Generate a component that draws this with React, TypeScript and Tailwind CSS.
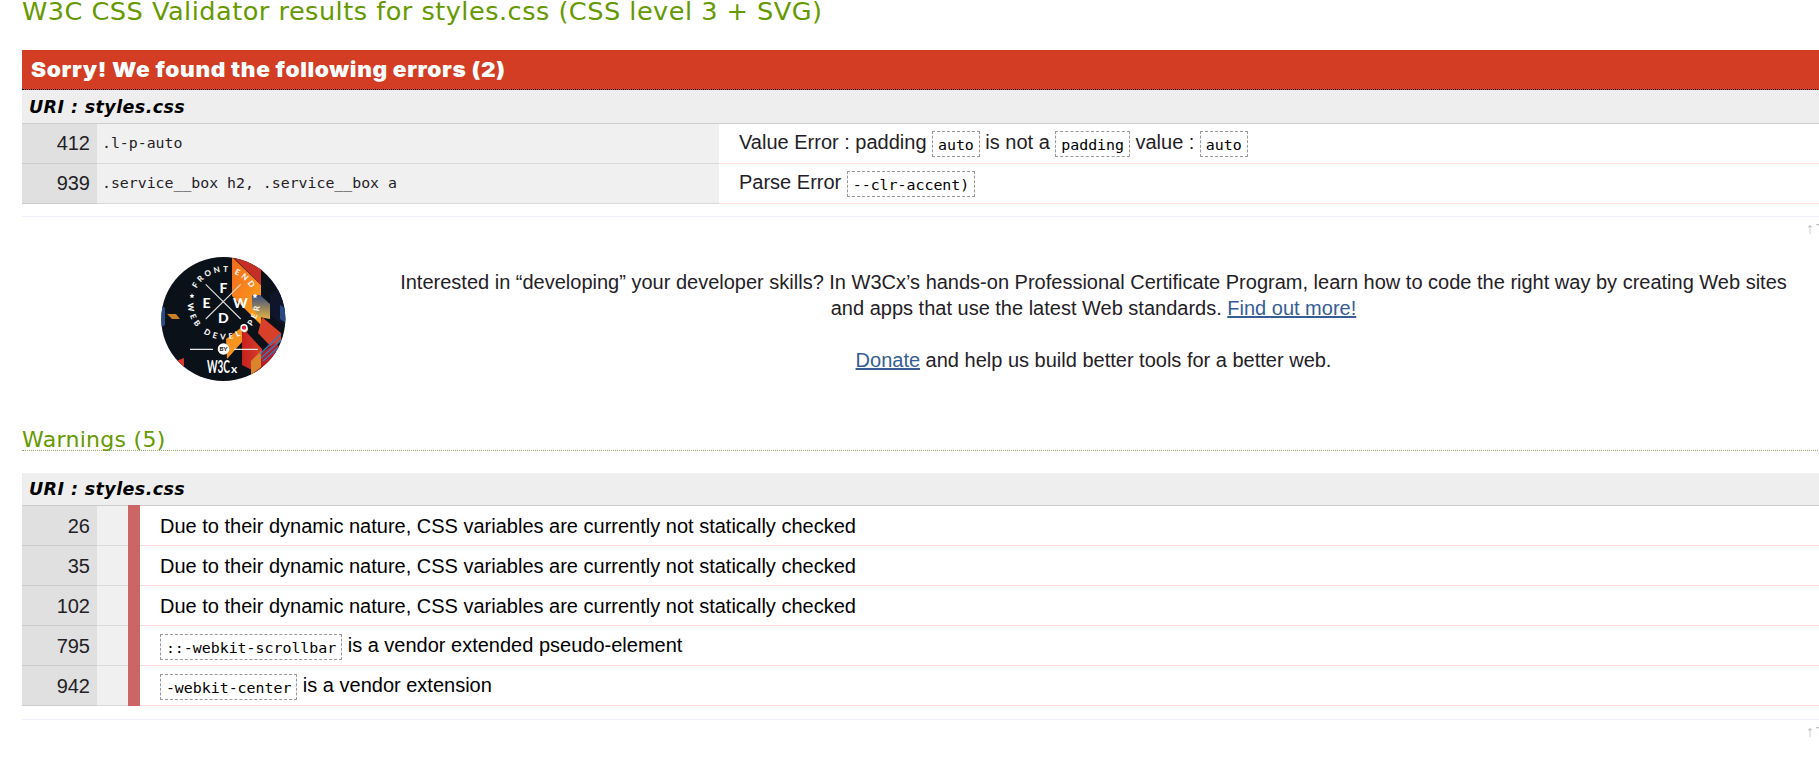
import type { ReactNode } from "react";

const Code = ({ children }: { children: ReactNode }) => (
  <code className="inline-block h-[26px] rounded-[1px] border border-dashed border-[#999] px-[4.9px] align-[-1px] font-['DejaVu_Sans_Mono','Liberation_Mono',monospace] text-[14.9px] leading-[26px] text-black">
    {children}
  </code>
);

const Uri = () => (
  <div className="flex h-full items-center pl-[7px] pt-px font-['DejaVu_Sans',Verdana,sans-serif] text-[17.5px] font-bold italic tracking-[0.4px] text-black">
    URI : styles.css
  </div>
);

const TopLink = () => (
  <div className="flex h-[25px] items-center justify-end gap-[2px] whitespace-nowrap border-t border-[#eeeeff] text-[15.5px] text-[#bbb]">
    <span>↑</span>
    <span>Top</span>
  </div>
);

function Badge() {
  return (
    <svg width="125" height="125" viewBox="0 0 125 125" className="block">
      <defs>
        <clipPath id="disc"><circle cx="62.3" cy="62" r="62" /></clipPath>
        <linearGradient id="orange" x1="0" y1="0" x2="1" y2="1">
          <stop offset="0" stopColor="#f26a1b" /><stop offset="1" stopColor="#ffa51f" />
        </linearGradient>
        <linearGradient id="fade" x1="0" y1="0" x2="0" y2="1">
          <stop offset="0" stopColor="#3c4f80" /><stop offset="1" stopColor="#e0b243" />
        </linearGradient>
        <linearGradient id="red" x1="0" y1="0" x2="1" y2="0">
          <stop offset="0" stopColor="#c6201f" /><stop offset="1" stopColor="#d8402a" />
        </linearGradient>
        <path id="upper" d="M35.7 31.5 A30.3 30.3 0 0 1 89.7 31.5" />
        <path id="lower" d="M26.7 46.5 A36 36 0 0 0 98.7 46.5" />
      </defs>
      <g clipPath="url(#disc)">
        <rect width="125" height="125" fill="#0b1118" />
        <path d="M71 0 L100 28 V68 L71 39Z" fill="url(#orange)" />
        <path d="M78 0 L100 12 V28 L72 0Z" fill="#c53026" />
        <path d="M91 38 H99 L109 47 V62 L98 60 L91 50Z" fill="url(#fade)" />
        <path d="M109 38 L120 30 L125 45 V71 L109 58Z" fill="#11152b" />
        <path d="M119 48 L125 52 V66 L119 62Z" fill="#274a82" />
        <path d="M101 60 L120 76 V84 L112 92 L97 76Z" fill="#d9402a" />
        <path d="M65 82 L81 70 V85 L66 102Z" fill="#f7941e" />
        <path d="M81 70 L101 92 V118 L81 108Z" fill="url(#red)" />
        <path d="M101 96 L113 86 L125 94 V122 H91Z" fill="#b91e25" />
        <path d="M90 104 L100 94 V110 L90 118Z" fill="#d8862b" />
        <path d="M99 97 L120 77 M100 101 L121 82 M102 104 L120 88" stroke="#3b75b5" strokeWidth="1.6" />
        <path d="M0 48 L4 51 V68 L0 70Z" fill="#2b4e82" />
        <path d="M6 57 H15 L19 62 H11Z" fill="#c97e27" />
        <path d="M10 106 L23 101 V113Z" fill="#d93831" />
        <path d="M44.7 27.3 L79.7 62 M79.7 27.3 L44.7 62" stroke="#ddd" strokeWidth="1.1" />
        <g fill="#fff" fontFamily="Lato, sans-serif" fontWeight="900" fontSize="14" textAnchor="middle">
          <text x="62.5" y="35.5">F</text><text x="45.5" y="50.5">E</text>
          <text x="79.5" y="50.5">W</text><text x="62.3" y="66.2">D</text>
        </g>
        <g fill="#f4f4f4" fontFamily="Lato, sans-serif" fontWeight="900" fontSize="8">
          <text><textPath href="#upper" textLength="66">FRONT END</textPath></text>
          <text><textPath href="#lower" textLength="110">WEB DEVELOPER</textPath></text>
        </g>
        <circle cx="83" cy="70.7" r="2.9" fill="#d9203a" stroke="#fff" strokeWidth="1.5" />
        <path id="star" d="M31 36.4 L31.8 38.1 L33.5 38.3 L32.2 39.5 L32.6 41.2 L31 40.3 L29.4 41.2 L29.8 39.5 L28.5 38.3 L30.2 38.1Z" fill="#fff" />
        <use href="#star" x="63" />
        <path d="M29 92.3 H52 M73 92.3 H97" stroke="#e8e8e8" strokeWidth="1.2" />
        <circle cx="62.5" cy="92" r="5.8" fill="#fff" />
        <text x="62.5" y="94.3" textAnchor="middle" fontFamily="Lato, sans-serif" fontWeight="900" fontSize="6" fill="#222">BY</text>
        <text x="46" y="115.5" fontFamily="Lato, sans-serif" fontSize="16.5" fontWeight="700" fill="#fff" textLength="23" lengthAdjust="spacingAndGlyphs">W3C</text>
        <text x="70" y="115.5" fontFamily="Lato, sans-serif" fontSize="12" fontWeight="700" fill="#fff">x</text>
      </g>
    </svg>
  );
}

const errors = [
  { line: 412, selector: ".l-p-auto", message: <>Value Error : padding <Code>auto</Code> is not a <Code>padding</Code> value : <Code>auto</Code></> },
  { line: 939, selector: ".service__box h2, .service__box a", message: <>Parse Error <Code>--clr-accent)</Code></> },
];

const dynamic = "Due to their dynamic nature, CSS variables are currently not statically checked";
const warnings: { line: number; message: ReactNode; lineHeight?: string }[] = [
  { line: 26, message: dynamic },
  { line: 35, message: dynamic },
  { line: 102, message: dynamic },
  { line: 795, message: <><Code>::-webkit-scrollbar</Code> is a vendor extended pseudo-element</>, lineHeight: "leading-[38px]" },
  { line: 942, message: <><Code>-webkit-center</Code> is a vendor extension</>, lineHeight: "leading-[38px]" },
];

export default function App() {
  return (
    <div className="h-[765px] w-full overflow-hidden bg-white font-['Liberation_Sans',Arial,sans-serif] text-[20px] text-[#1f2126]">
      <main className="ml-[22px] w-[1820px]">
        <h1 className="h-[50px] whitespace-nowrap font-['DejaVu_Sans',Verdana,sans-serif] text-[25.6px] leading-[23px] tracking-[0.48px] text-[#690]">
          W3C CSS Validator results for styles.css (CSS level 3 + SVG)
        </h1>
        <h2 className="h-10 border-b border-dotted border-black bg-[#d23d24] pl-[9px] font-['Inter',sans-serif] text-[20.6px] font-black leading-[39px] text-white">
          <span className="inline-block origin-left scale-x-110 tracking-[0.55px]">Sorry! We found the following errors (2)</span>
        </h2>
        <div className="h-[34px] border-b border-[#ccc] bg-[#eee]"><Uri /></div>
        {errors.map((e) => (
          <div key={e.line} className="flex h-10 leading-[38px]">
            <div className="w-[75px] border-b border-[#ccc] bg-[#e0e0e0] pr-[7px] text-right">{e.line}</div>
            <div className="w-[622px] border-b border-[#d9d9d9] bg-[#f0f0f0] pl-[5px] font-['DejaVu_Sans_Mono','Liberation_Mono',monospace] text-[14.85px]">{e.selector}</div>
            <div className="flex-1 whitespace-nowrap border-b border-[#fdd] pl-5 leading-[36px]">{e.message}</div>
          </div>
        ))}
        <div className="pt-3"><div className="w-[1819px]"><TopLink /></div></div>
        <section className="flex h-[182px] pt-4">
          <div className="w-[324px] pl-[139px]"><Badge /></div>
          <div className="w-[1495px] pt-3 text-center leading-[26px]">
            <p>
              Interested in “developing” your developer skills? In W3Cx’s hands-on Professional Certificate Program, learn how to code the right way by creating Web sites
              <br />
              and apps that use the latest Web standards. <a className="text-[#365d95] underline">Find out more!</a>
            </p>
            <p className="mt-[26px]"><a className="text-[#365d95] underline">Donate</a> and help us build better tools for a better web.</p>
          </div>
        </section>
        <h3 className="mb-[22px] h-[28px] border-b border-dotted border-[#9aa66a] font-['DejaVu_Sans',Verdana,sans-serif] text-[22px] leading-[33px] tracking-[0.3px] text-[#690]">
          Warnings (5)
        </h3>
        <div className="h-[33px] border-b border-[#ccc] bg-[#eee]"><Uri /></div>
        <div className="relative">
          {warnings.map((w) => (
            <div key={w.line} className="flex h-10 leading-[40px]">
              <div className="w-[75px] border-b border-[#ccc] bg-[#e0e0e0] pr-[7px] text-right">{w.line}</div>
              <div className="w-[31px] border-b border-[#d9d9d9] bg-[#f0f0f0]" />
              <div className={`flex-1 whitespace-nowrap border-b border-[#fdd] pl-[32px] text-black ${w.lineHeight ?? ""}`}>{w.message}</div>
            </div>
          ))}
          <div className="absolute -top-px left-[106px] h-[201px] w-3 bg-[#c66]" />
        </div>
        <div className="pt-[13px]"><div className="w-[1819px]"><TopLink /></div></div>
      </main>
    </div>
  );
}
